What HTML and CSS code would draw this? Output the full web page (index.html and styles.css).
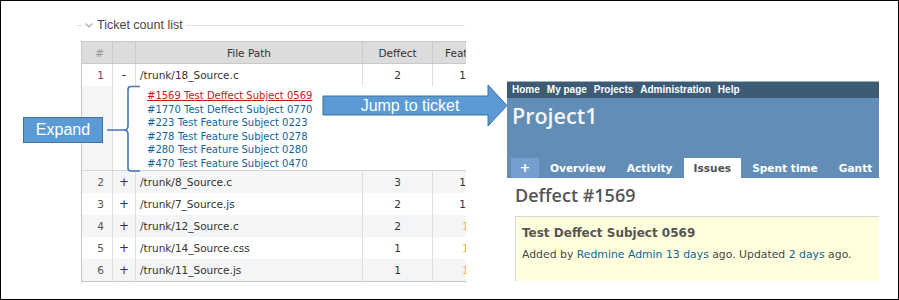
FILE: index.html
```html
<!DOCTYPE html>
<html lang="en">
<head>
    <meta charset="UTF-8">
    <title>Ticket count list</title>
    <link rel="stylesheet" href="styles.css">
</head>
<body>
<div class="frame">
    <div class="ticket-panel">
        <div class="legend">
            <span class="legend-dash"></span>
            <svg class="chevron" width="8" height="5" viewBox="0 0 8 5"><path d="M0.5 0.5 L4 4 L7.5 0.5" fill="none" stroke="#aaa" stroke-width="1.2"/></svg>
            <span class="legend-title">Ticket count list</span>
            <span class="legend-line"></span>
        </div>
        <div class="table-wrap">
            <table class="list">
                <thead>
                <tr>
                    <th class="num">#</th>
                    <th class="toggle"></th>
                    <th class="path">File Path</th>
                    <th class="count">Deffect</th>
                    <th class="count feat">Feature</th>
                </tr>
                </thead>
                <tbody>
                <tr>
                    <td class="num">1</td>
                    <td class="toggle">-</td>
                    <td class="path">/trunk/18_Source.c</td>
                    <td class="count">2</td>
                    <td class="count">1</td>
                </tr>
                <tr class="tickets">
                    <td class="num"></td>
                    <td colspan="4">
                        <ul class="ticket-links">
                            <li><a class="hover" href="#">#1569 Test Deffect Subject 0569</a></li>
                            <li><a href="#">#1770 Test Deffect Subject 0770</a></li>
                            <li><a href="#">#223 Test Feature Subject 0223</a></li>
                            <li><a href="#">#278 Test Feature Subject 0278</a></li>
                            <li><a href="#">#280 Test Feature Subject 0280</a></li>
                            <li><a href="#">#470 Test Feature Subject 0470</a></li>
                        </ul>
                    </td>
                </tr>
                <tr class="odd">
                    <td class="num">2</td>
                    <td class="toggle">+</td>
                    <td class="path">/trunk/8_Source.c</td>
                    <td class="count">3</td>
                    <td class="count">1</td>
                </tr>
                <tr>
                    <td class="num">3</td>
                    <td class="toggle">+</td>
                    <td class="path">/trunk/7_Source.js</td>
                    <td class="count">2</td>
                    <td class="count">1</td>
                </tr>
                <tr class="odd">
                    <td class="num">4</td>
                    <td class="toggle">+</td>
                    <td class="path">/trunk/12_Source.c</td>
                    <td class="count">2</td>
                    <td class="count warn">1</td>
                </tr>
                <tr>
                    <td class="num">5</td>
                    <td class="toggle">+</td>
                    <td class="path">/trunk/14_Source.css</td>
                    <td class="count">1</td>
                    <td class="count warn">1</td>
                </tr>
                <tr class="odd">
                    <td class="num">6</td>
                    <td class="toggle">+</td>
                    <td class="path">/trunk/11_Source.js</td>
                    <td class="count">1</td>
                    <td class="count warn">1</td>
                </tr>
                </tbody>
            </table>
        </div>
    </div>

    <div class="redmine">
        <div class="top-menu">
            <a href="#">Home</a>
            <a href="#">My page</a>
            <a href="#">Projects</a>
            <a href="#">Administration</a>
            <a href="#">Help</a>
        </div>
        <div class="header">
            <h1>Project1</h1>
            <ul class="tabs">
                <li class="new-tab">+</li>
                <li>Overview</li>
                <li>Activity</li>
                <li class="selected">Issues</li>
                <li>Spent time</li>
                <li>Gantt</li>
            </ul>
        </div>
        <div class="content">
            <h2>Deffect #1569</h2>
            <div class="issue">
                <h3>Test Deffect Subject 0569</h3>
                <p class="author">Added by <a href="#">Redmine Admin</a> <a href="#">13 days</a> ago. Updated <a href="#">2 days</a> ago.</p>
            </div>
        </div>
    </div>

    <!-- annotations drawn over the screenshots -->
    <div class="callout expand-label">Expand</div>
    <svg class="brace" width="40" height="92" viewBox="0 0 40 92">
        <path d="M35 2.5 H26 Q23 2.5 23 5.5 V42 Q23 46 19 46 Q23 46 23 50 V84 Q23 87 26 87 H35 M2 46 H19" fill="none" stroke="#4472c4" stroke-width="1.6"/>
    </svg>
    <div class="jump">
        <svg class="jump-shape" width="187" height="43" viewBox="0 0 187 43">
            <polygon points="1,12 166,12 166,1 185,21.5 166,42 166,31 1,31" fill="#5b9bd5" stroke="#41719c" stroke-width="1"/>
        </svg>
        <span class="jump-text">Jump to ticket</span>
    </div>
</div>
</body>
</html>
```

FILE: styles.css
```css
body {
    margin: 0;
    background: #fff;
}
.frame {
    position: relative;
    width: 899px;
    height: 300px;
    box-sizing: border-box;
    border: 1px solid #000;
    display: flex;
    align-items: flex-start;
    background: #fff;
    overflow: hidden;
}

/* left: ticket count list */
.ticket-panel {
    width: 388px;
    margin: 16px 0 0 76px;
}
.legend {
    display: flex;
    align-items: center;
    height: 16px;
}
.legend-dash {
    width: 5px;
    height: 1px;
    background: #ddd;
    margin-right: 3px;
}
.chevron {
    margin-right: 4px;
}
.legend-title {
    font-family: "Liberation Sans", Arial, sans-serif;
    font-size: 12.5px;
    color: #484848;
}
.legend-line {
    flex: 1;
    height: 1px;
    background: #e2e2e2;
    margin-left: 3px;
}
.table-wrap {
    margin: 8px 0 0 4px;
    width: 384px;
    overflow: hidden;
    border-left: 1px solid #c6c6c6;
    border-top: 1px solid #c6c6c6;
    border-bottom: 1px solid #c6c6c6;
}
.list {
    table-layout: fixed;
    width: 411px;
    border-spacing: 0;
    font-family: "DejaVu Sans", Verdana, sans-serif;
    font-size: 10.5px;
    color: #333;
}
.list th {
    background: #dcdcdc;
    height: 22px;
    padding: 0;
    font-weight: normal;
    border-right: 1px solid #c9c9c9;
    border-bottom: 1px solid #c9c9c9;
    box-sizing: border-box;
}
.list th.num { width: 31px; color: #999; text-align: right; padding-right: 8px; }
.list th.toggle { width: 23px; }
.list th.path { width: 227px; }
.list th.count { width: 70px; }
.list th.feat { width: 60px; text-align: left; padding-left: 12px; }
.list td {
    height: 22px;
    padding: 0;
    border-right: 1px solid #dedede;
    box-sizing: border-box;
    white-space: nowrap;
}
.list td.num {
    text-align: right;
    padding-right: 8px;
    color: #555;
}
.list td.toggle {
    text-align: center;
    font-size: 12px;
}
.list td.path {
    padding-left: 4px;
}
.list td.count {
    text-align: center;
}
.list td.warn {
    color: #f0b030;
    padding-left: 6px;
}
.list tr.odd td {
    background: #f3f5f6;
}
.list tr.tickets td {
    height: 85px;
    vertical-align: top;
    border-right: none;
    border-bottom: 1px solid #d6d6d6;
}
.list tr.tickets td.num {
    background: #f4f5f6;
    border-right: 1px solid #dedede;
}
.ticket-links {
    list-style: none;
    margin: 0;
    padding: 3px 0 0 34px;
    font-size: 10px;
    line-height: 13.5px;
}
.ticket-links a {
    color: #169;
    text-decoration: none;
}
.ticket-links a.hover {
    color: #c61a1a;
    text-decoration: underline;
}

/* right: redmine issue page */
.redmine {
    width: 372px;
    height: 200px;
    margin: 80px 0 0 42px;
    overflow: hidden;
    background: #fff;
}
.top-menu {
    background: #3e5b76;
    border-top: 1px solid #9fb0c0;
    height: 16px;
    line-height: 16px;
    padding-left: 5px;
    display: flex;
    gap: 7px;
    font-family: "Liberation Sans", Arial, sans-serif;
    font-size: 10px;
    font-weight: bold;
}
.top-menu a {
    color: #fff;
    text-decoration: none;
}
.header {
    background: #628db6;
    height: 80px;
    display: flex;
    flex-direction: column;
    justify-content: space-between;
}
.header h1 {
    margin: 5px 0 0 5px;
    font-family: "Open Sans", sans-serif;
    font-weight: 600;
    font-size: 21.5px;
    line-height: 26px;
    color: #f4f6f8;
}
.tabs {
    list-style: none;
    margin: 0;
    padding-left: 4px;
    display: flex;
    gap: 1px;
    font-family: "DejaVu Sans", Verdana, sans-serif;
    font-size: 10.6px;
    font-weight: bold;
    line-height: 20px;
    white-space: nowrap;
}
.tabs li {
    flex-shrink: 0;
    color: #fff;
    padding: 0 10px;
}
.tabs li.new-tab {
    background: #759fcf;
    width: 28px;
    box-sizing: border-box;
    padding: 0;
    text-align: center;
    font-size: 13px;
}
.tabs li.selected {
    background: #fff;
    color: #555;
}
.content {
    padding-left: 8px;
}
.content h2 {
    margin: 6px 0 0;
    font-family: "Open Sans", sans-serif;
    font-weight: 600;
    font-size: 18px;
    line-height: 22px;
    color: #555;
}
.issue {
    margin-top: 10px;
    height: 80px;
    background: #ffffdd;
    border-top: 1px solid #d7d7d7;
    border-left: 1px solid #d7d7d7;
    padding: 8px 0 0 6px;
    font-family: "DejaVu Sans", Verdana, sans-serif;
    color: #484848;
    white-space: nowrap;
}
.issue h3 {
    margin: 0;
    font-size: 12px;
    line-height: 16px;
    color: #555;
}
.author {
    margin: 7px 0 0;
    font-size: 10.85px;
    line-height: 14px;
}
.author a {
    color: #169;
    text-decoration: none;
}

/* annotations */
.callout {
    position: absolute;
    background: #5b9bd5;
    border: 1px solid #41719c;
    color: #fff;
    font-family: "Liberation Sans", Arial, sans-serif;
    font-size: 16px;
    text-align: center;
}
.expand-label {
    left: 22px;
    top: 116px;
    width: 78px;
    height: 24px;
    line-height: 24px;
}
.brace {
    position: absolute;
    left: 104px;
    top: 83px;
}
.jump {
    position: absolute;
    left: 321px;
    top: 83px;
    width: 187px;
    height: 43px;
}
.jump-shape {
    position: absolute;
    left: 0;
    top: 0;
}
.jump-text {
    position: relative;
    display: block;
    width: 176px;
    margin-top: 12px;
    text-align: center;
    line-height: 19px;
    color: #fff;
    font-family: "Liberation Sans", Arial, sans-serif;
    font-size: 16px;
}
```
